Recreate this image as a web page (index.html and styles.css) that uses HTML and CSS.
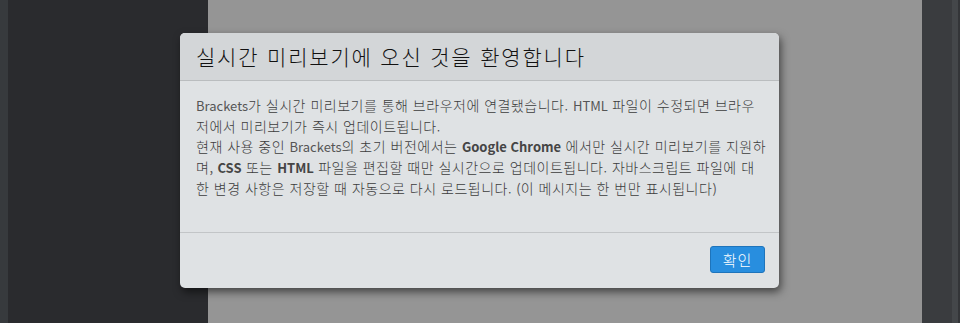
FILE: index.html
```html
<!DOCTYPE html>
<html lang="ko">
<head>
  <meta charset="UTF-8">
  <title>실시간 미리보기</title>
  <link rel="stylesheet" href="styles.css">
</head>
<body>
  <div class="workspace">
    <div class="sidebar-edge"></div>
    <div class="sidebar"></div>
    <div class="editor"></div>
    <div class="scrollbar"></div>
    <div class="scroll-edge"></div>
    <div class="scroll-end"></div>
  </div>

  <div class="modal">
    <div class="modal-header">
      <h1 class="modal-title">실시간 미리보기에 오신 것을 환영합니다</h1>
    </div>
    <div class="modal-body">
      <p><span class="en">Brackets</span>가 실시간 미리보기를 통해 브라우저에 연결됐습니다. <span class="en">HTML</span> 파일이 수정되면 브라우저에서 미리보기가 즉시 업데이트됩니다.<br>
      현재 사용 중인 <span class="en">Brackets</span>의 초기 버전에서는 <strong class="en">Google Chrome</strong> 에서만 실시간 미리보기를 지원하며<span class="en">,</span> <strong class="en">CSS</strong> 또는 <strong class="en">HTML</strong> 파일을 편집할 때만 실시간으로 업데이트됩니다. 자바스크립트 파일에 대한 변경 사항은 저장할 때 자동으로 다시 로드됩니다. <span class="en">(</span>이 메시지는 한 번만 표시됩니다<span class="en">)</span></p>
    </div>
    <div class="modal-footer">
      <button class="btn-primary">확인</button>
    </div>
  </div>
</body>
</html>
```

FILE: styles.css
```css
html, body {
  margin: 0;
  padding: 0;
  height: 100%;
  overflow: hidden;
}

body {
  font-family: "Noto Sans CJK KR", sans-serif;
  position: relative;
}

.workspace {
  display: flex;
  height: 100%;
}

.sidebar-edge {
  width: 8px;
  background: #373a3d;
}

.sidebar {
  width: 200px;
  background: #2a2b2e;
}

.editor {
  flex: 1;
  background: #959595;
}

.scrollbar {
  width: 30px;
  background: #3a3c3f;
}

.scroll-edge {
  width: 6px;
  background: #44474a;
}

.scroll-end {
  width: 2px;
  background: #333538;
}

.modal {
  position: absolute;
  left: 180px;
  top: 33px;
  width: 599px;
  background: #dfe2e4;
  border-radius: 5px;
  box-shadow: 2px 4px 8px rgba(0, 0, 0, 0.55);
  overflow: hidden;
}

.modal-header {
  background: #d3d6d8;
  border-bottom: 1px solid #babdbf;
  padding: 8px 16px 9px;
}

.modal-title {
  margin: 0;
  font-weight: 300;
  font-size: 21px;
  letter-spacing: 1.8px;
  line-height: 30px;
  color: #111;
}

.modal-body {
  padding: 14px 12px 33px 16px;
  border-bottom: 1px solid #c2c5c7;
}

.modal-body p {
  margin: 0;
  font-size: 14px;
  font-weight: 300;
  letter-spacing: 0.5px;
  line-height: 20px;
  color: #3c3c3c;
}

.modal-body .en {
  font-size: 13px;
  font-weight: 400;
  letter-spacing: 0;
  color: #555;
}

.modal-body strong.en {
  font-weight: 700;
  color: #454545;
}

.modal-footer {
  display: flex;
  justify-content: flex-end;
  padding: 13px 14px 15px;
}

.btn-primary {
  font-family: "Noto Sans CJK KR", sans-serif;
  font-size: 15px;
  font-weight: 300;
  letter-spacing: 1px;
  width: 55px;
  height: 27px;
  padding: 0;
  color: #fff;
  background: #288edf;
  border: 1px solid #1e74bb;
  border-radius: 3px;
}
```
